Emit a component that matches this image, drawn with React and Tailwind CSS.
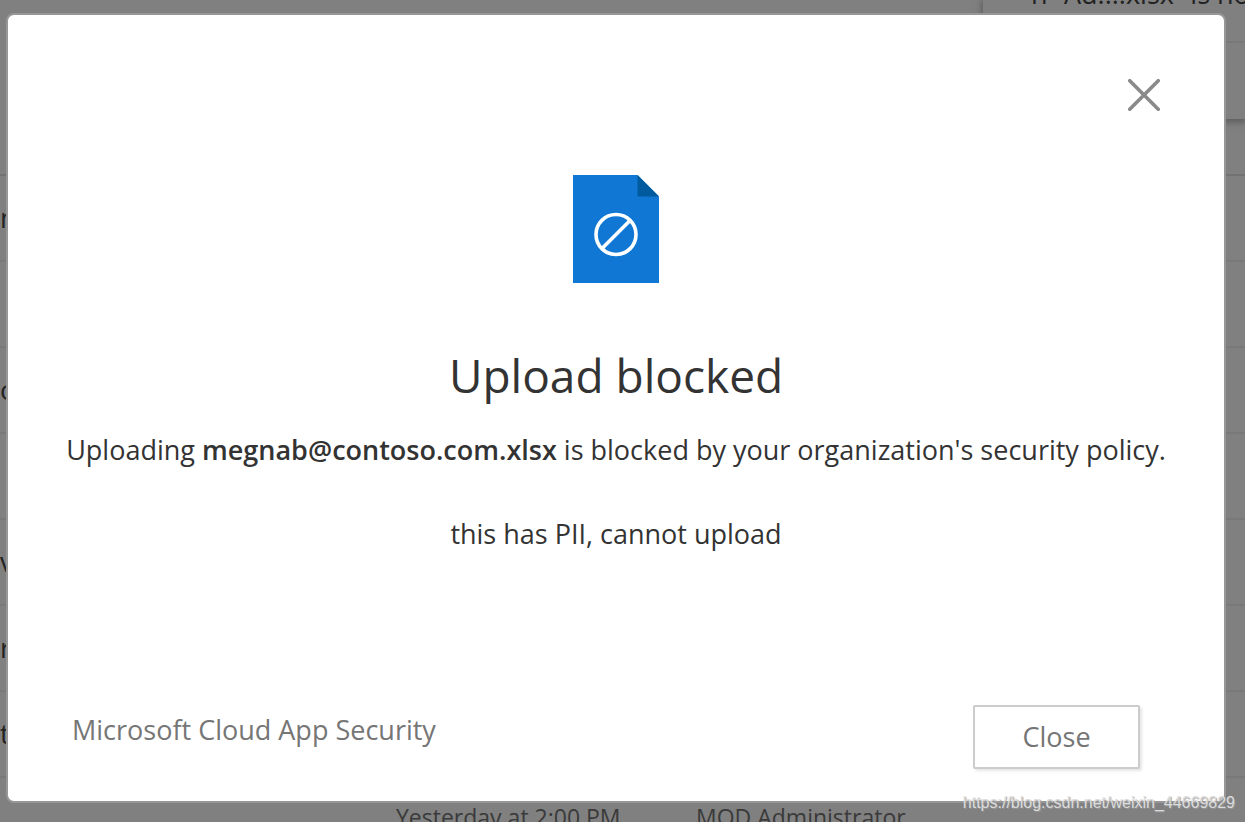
const rows = [
  { name: "n", modified: "", by: "" },
  { name: "", modified: "", by: "" },
  { name: "o", modified: "", by: "" },
  { name: "", modified: "", by: "" },
  { name: "v", modified: "", by: "" },
  { name: "r", modified: "", by: "" },
  { name: "t", modified: "", by: "" },
  { name: "", modified: "Yesterday at 2:00 PM", by: "MOD Administrator" },
];

function FileList() {
  return (
    <table className="w-full table-fixed border-collapse text-[23px] text-[#3a3a3a]">
      <colgroup>
        <col className="w-[396px]" />
        <col className="w-[300px]" />
        <col />
      </colgroup>
      <tbody>
        {rows.map((row, i) => (
          <tr key={i} className="h-[86px] border-t-2 border-[#797979] first:border-[#727272]">
            <td className="p-0 text-[27px] text-[#222]">{row.name}</td>
            <td className="p-0 pb-1.5 whitespace-nowrap">{row.modified}</td>
            <td className="p-0 pb-1.5 whitespace-nowrap">{row.by}</td>
          </tr>
        ))}
      </tbody>
    </table>
  );
}

function Notification() {
  return (
    <aside className="absolute top-0 right-0 w-[262px] bg-[#808080] shadow-[0_2px_6px_2px_#606060]">
      <p className="-mt-6 h-[67px] border-b-2 border-[#797979] pl-12 text-[27px] leading-9 whitespace-nowrap text-[#222]">
        n “Ad....xlsx” is not
      </p>
      <div className="h-[76px]" />
    </aside>
  );
}

function BlockedFileIcon() {
  return (
    <svg width="86" height="108" viewBox="0 0 86 108" aria-hidden="true">
      <path d="M0 0H64.500L86 21.500V108H0Z" fill="#1078d4" />
      <path d="M64.500 0L86 21.500H64.500Z" fill="#005a9e" />
      <g fill="none" stroke="#fff" strokeWidth="3.600">
        <circle cx="43" cy="59.500" r="20" />
        <path d="M29 73.500L57 45.500" />
      </g>
    </svg>
  );
}

export default function App() {
  return (
    <div className="relative h-screen overflow-hidden bg-[#808080] font-['Open_Sans','Noto_Sans',sans-serif]">
      <main className="pt-[174px]" aria-hidden="true">
        <FileList />
      </main>
      <Notification />

      <div className="absolute inset-0 flex pt-[13px] pr-[19px] pb-[19px] pl-1.5">
        <section
          role="dialog"
          aria-modal="true"
          aria-labelledby="dialog-title"
          className="flex min-w-0 flex-1 flex-col rounded-lg border-2 border-[#979797] bg-white px-16 pt-16 pb-8 text-[27px] leading-[42px] text-[#333]"
        >
          <button type="button" aria-label="Dismiss" className="self-end text-[#8a8a8a]">
            <svg width="32" height="32" viewBox="0 0 32 32" fill="none" stroke="currentColor" strokeWidth="3.600" aria-hidden="true">
              <path d="M0.500 0.500L31.500 31.500M31.500 0.500L0.500 31.500" />
            </svg>
          </button>
          <div className="mt-16 flex flex-col items-center text-center">
            <BlockedFileIcon />
            <h1 id="dialog-title" className="mt-[62px] text-[46px] leading-[60px]">
              Upload blocked
            </h1>
            <p className="mt-6 whitespace-nowrap">
              Uploading <strong className="font-semibold">megnab@contoso.com.xlsx</strong> is blocked by your
              organization's security policy.
            </p>
            <p className="mt-[42px]">this has PII, cannot upload</p>
          </div>
          <footer className="mt-auto flex items-start justify-between pr-5 text-[#767676]">
            <span className="mt-1">Microsoft Cloud App Security</span>
            <button
              type="button"
              className="h-16 w-[167px] rounded-xs border-2 border-[#ccc] bg-white shadow-[2px_2px_3px_#0000001a]"
            >
              Close
            </button>
          </footer>
        </section>
      </div>

      <div className="absolute right-2.5 bottom-[7px] font-['Liberation_Sans',sans-serif] text-base leading-6 text-[#dcdcdc] [text-shadow:1px_1px_1px_#999]">
        https://blog.csdn.net/weixin_44669829
      </div>
    </div>
  );
}
